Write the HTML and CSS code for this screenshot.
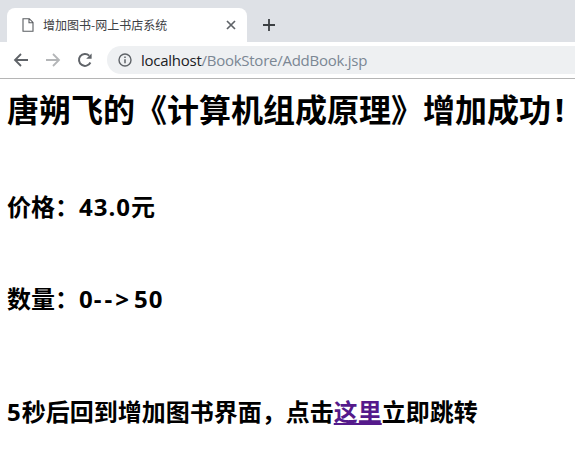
FILE: index.html
```html
<!DOCTYPE html>
<html lang="zh-CN">
<head>
    <meta charset="UTF-8">
    <title>增加图书-网上书店系统</title>
    <link rel="stylesheet" href="styles.css">
</head>
<body>
    <div class="tab-bar">
        <div class="tab">
            <svg class="tab-icon" width="12" height="14" viewBox="0 0 12 14">
                <path d="M1 .7h6.3L11 4.4v8.9H1z M7 .7v4h4" fill="none" stroke="#5a5d61" stroke-width="1.1"/>
            </svg>
            <span class="tab-title">增加图书-网上书店系统</span>
            <svg class="tab-close" width="10" height="10" viewBox="0 0 10 10">
                <path d="M1 1l8 8M9 1l-8 8" fill="none" stroke="#5f6368" stroke-width="1.7"/>
            </svg>
        </div>
        <svg class="new-tab" width="14" height="14" viewBox="0 0 14 14">
            <path d="M7 1v12M1 7h12" fill="none" stroke="#3c4043" stroke-width="1.8"/>
        </svg>
    </div>
    <div class="toolbar">
        <svg class="nav-icon" width="16" height="16" viewBox="0 0 16 16">
            <path d="M15 8H2M8 2L2 8l6 6" fill="none" stroke="#5f6368" stroke-width="1.8"/>
        </svg>
        <svg class="nav-icon" width="16" height="16" viewBox="0 0 16 16">
            <path d="M1 8h13M8 2l6 6-6 6" fill="none" stroke="#b4b6b8" stroke-width="1.8"/>
        </svg>
        <svg class="nav-icon" width="16" height="16" viewBox="0 0 16 16">
            <path d="M13.4 10.5A6 6 0 1 1 12.2 3.6" fill="none" stroke="#5f6368" stroke-width="2"/>
            <path d="M14.6 1.4v5.4H9.2z" fill="#5f6368"/>
        </svg>
        <div class="address-bar">
            <svg class="info-icon" width="14" height="14" viewBox="0 0 14 14">
                <circle cx="7" cy="7" r="6" fill="none" stroke="#5f6368" stroke-width="1.4"/>
                <path d="M7 6.2v4M7 3.6v1.5" fill="none" stroke="#5f6368" stroke-width="1.5"/>
            </svg>
            <span class="url-host">localhost</span><span class="url-path">/BookStore/AddBook.jsp</span>
        </div>
    </div>
    <div class="page">
        <h1>唐朔飞的《计算机组成原理》增加成功<span class="bang">!</span></h1>
        <h2 class="price">价格&#xFF1A;<span class="num">43.0</span>元</h2>
        <h2 class="amount">数量&#xFF1A;<span class="num">0</span><span class="arrow">--&gt;</span><span class="num">50</span></h2>
        <h2 class="jump"><span class="num">5</span>秒后回到增加图书界面&#xFF0C;点击<a href="#">这里</a>立即跳转</h2>
    </div>
</body>
</html>
```

FILE: styles.css
```css
body {
    margin: 0;
    background-color: #fff;
    font-family: "Open Sans", "Noto Sans CJK SC", sans-serif;
    overflow: hidden;
}
.tab-bar {
    display: flex;
    align-items: flex-end;
    height: 42px;
    background-color: #dee1e6;
}
.tab {
    display: flex;
    align-items: center;
    width: 240px;
    height: 34px;
    margin-left: 7px;
    padding-bottom: 1px;
    box-sizing: border-box;
    background-color: #fff;
    border-radius: 8px 8px 0 0;
}
.tab-icon {
    margin-left: 15px;
}
.tab-title {
    margin-left: 9px;
    font-family: "Noto Sans CJK SC", sans-serif;
    font-size: 12px;
    color: #3c4043;
}
.tab-close {
    margin-left: auto;
    margin-right: 11px;
}
.new-tab {
    margin: 0 0 10px 15px;
}
.toolbar {
    display: flex;
    align-items: center;
    height: 36px;
    border-bottom: 1px solid #b5b5b5;
}
.nav-icon {
    margin-left: 13px;
    margin-right: 3px;
}
.address-bar {
    display: flex;
    align-items: center;
    flex: 1;
    height: 28px;
    margin-left: 11px;
    background-color: #eef0f2;
    border-radius: 14px 0 0 14px;
    font-size: 15px;
    letter-spacing: -0.26px;
}
.info-icon {
    margin: 0 9px 0 11px;
}
.url-host {
    color: #202124;
}
.url-path {
    color: #7b8794;
}
.page {
    padding: 0 7px;
}
h1 {
    margin: 0;
    padding-top: 6px;
    font-size: 32px;
    color: #000;
}
.bang {
    margin-left: 4px;
}
h2 {
    margin: 0;
    font-size: 24px;
    color: #000;
}
.num {
    letter-spacing: 1px;
}
.price {
    padding-top: 57px;
}
.amount {
    padding-top: 57px;
}
.arrow {
    letter-spacing: 3px;
    margin-right: 2px;
}
.jump {
    padding-top: 78px;
}
a {
    color: #551a8b;
}
```
